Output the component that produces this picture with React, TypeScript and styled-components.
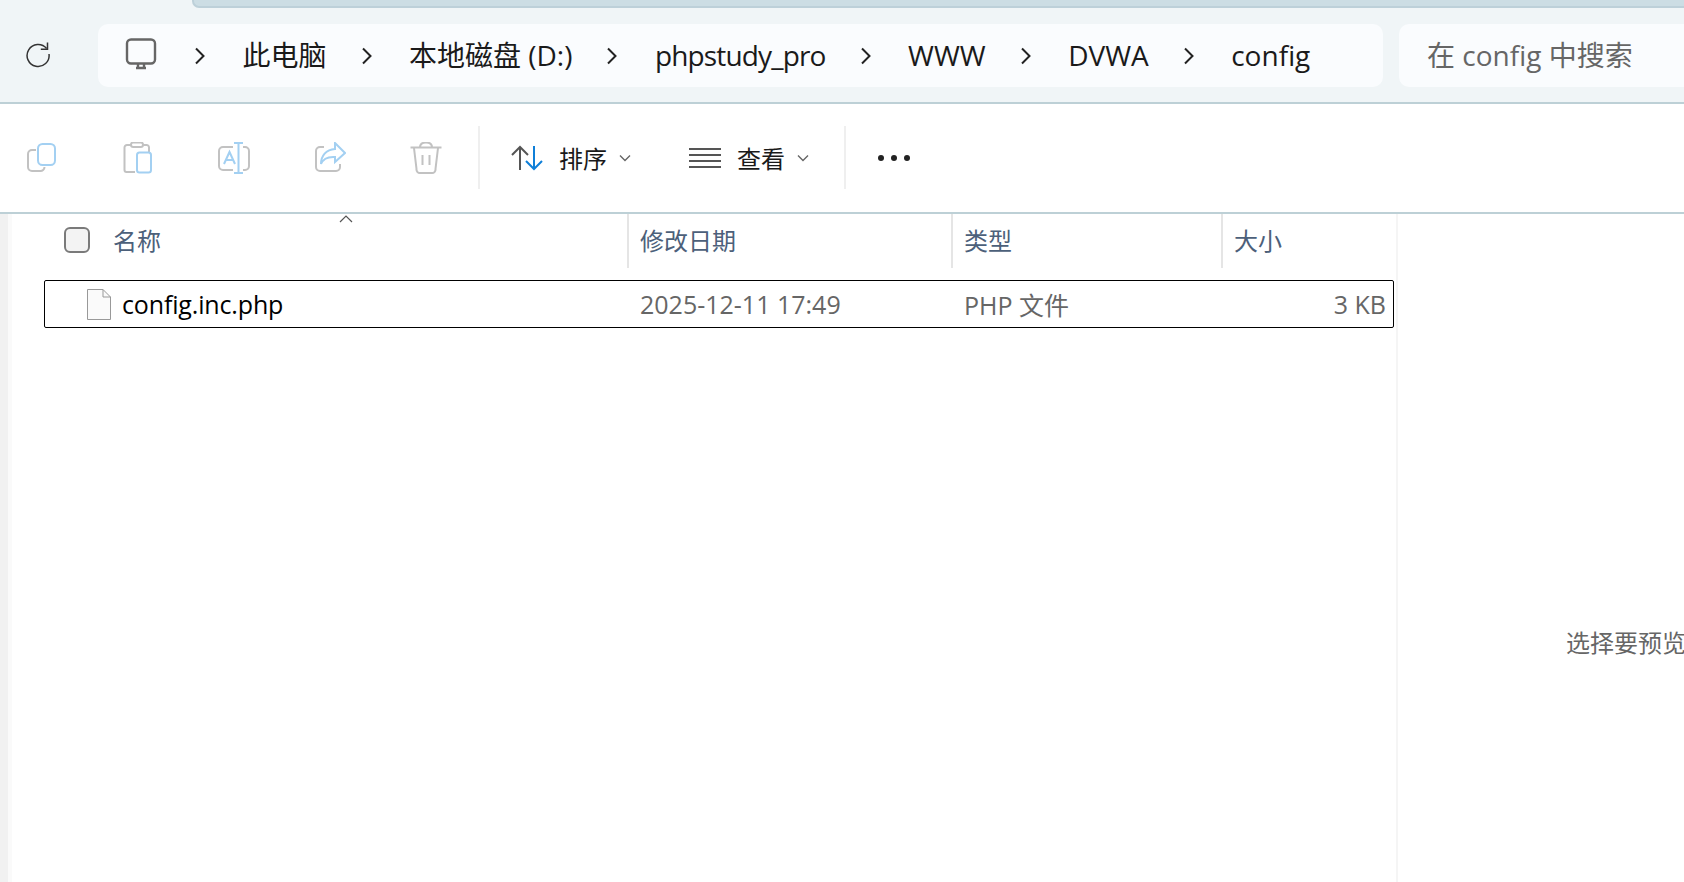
import styled, { createGlobalStyle } from 'styled-components';

const GlobalStyle = createGlobalStyle`
	html, body {
		margin: 0;
		padding: 0;
		width: 100%;
		height: 100%;
		overflow: hidden;
		background: #fff;
		font-family: "Open Sans", "Noto Sans CJK SC", sans-serif;
	}
`;

const Window = styled.div`
	display: flex;
	flex-direction: column;
	width: 1684px;
	height: 882px;
	overflow: hidden;
`;

const TabStrip = styled.div`
	flex: none;
	height: 8px;
	background: #f0f5f7;
	padding-left: 192px;
	box-sizing: border-box;
`;

const ActiveTabEdge = styled.div`
	height: 8px;
	background: #ccdde4;
	border-bottom: 2px solid #bdd0d9;
	border-left: 2px solid #bdd0d9;
	border-bottom-left-radius: 7px;
	box-sizing: border-box;
`;

const AddressRow = styled.div`
	flex: none;
	display: flex;
	align-items: center;
	height: 96px;
	box-sizing: border-box;
	padding: 16px 0 15px 24px;
	background: #f0f5f7;
	border-bottom: 2px solid #bdd0d6;
`;

const RefreshIcon = styled.svg`
	flex: none;
	width: 28px;
	height: 28px;
	margin: 0 46px 3px 0;
`;

const Breadcrumb = styled.div`
	flex: none;
	display: flex;
	align-items: center;
	width: 1285px;
	height: 63px;
	box-sizing: border-box;
	padding-left: 27px;
	gap: 33px;
	background: #fafcfe;
	border-radius: 10px;
	color: #1a1a1a;
	font-size: 28px;
	white-space: nowrap;
`;

const HomeIcon = styled.svg`
	flex: none;
	width: 32px;
	height: 32px;
	margin: 0 3px 3px 0;
`;

const CrumbChevron = styled.svg`
	flex: none;
	width: 14px;
	height: 20px;
	margin-right: 2.5px;
`;

const Crumb = styled.span<{ $tight?: boolean }>`
	line-height: 63px;
	letter-spacing: ${p => (p.$tight ? '-0.85px' : '0')};
`;

const SearchBox = styled.div`
	flex: none;
	width: 400px;
	height: 63px;
	margin-left: 16px;
	padding-left: 28px;
	box-sizing: border-box;
	background: #fafcfe;
	border-radius: 10px 0 0 10px;
	color: #666;
	font-size: 28px;
	line-height: 63px;
	white-space: nowrap;
`;

const Toolbar = styled.div`
	flex: none;
	display: flex;
	align-items: center;
	height: 110px;
	box-sizing: border-box;
	padding: 0 0 1px 26px;
	background: #fff;
	border-bottom: 2px solid #bdd0d6;
`;

const ToolIcon = styled.svg`
	flex: none;
	width: 32px;
	height: 32px;
	margin-right: 64px;
`;

const ToolDivider = styled.div<{ $left: number }>`
	flex: none;
	width: 2px;
	height: 63px;
	background: #efefef;
	margin-left: ${p => p.$left}px;
`;

const MenuButton = styled.div<{ $left: number }>`
	flex: none;
	display: flex;
	align-items: center;
	margin-left: ${p => p.$left}px;
	color: #1a1a1a;
	font-size: 24px;
	white-space: nowrap;
`;

const MenuIcon = styled.svg`
	flex: none;
`;

const MenuLabel = styled.span`
	margin: 0 12px 0 16px;
`;

const MoreDots = styled.div`
	flex: none;
	display: flex;
	gap: 7px;
	margin-left: 32px;
`;

const Dot = styled.span`
	width: 6px;
	height: 6px;
	border-radius: 50%;
	background: #222;
`;

const Content = styled.div`
	flex: 1;
	display: flex;
	min-height: 0;
`;

const NavEdge = styled.div`
	flex: none;
	width: 8px;
	background: #f1f1f1;
	border-right: 4px solid #fafafa;
`;

const ListPane = styled.div`
	position: relative;
	flex: none;
	width: 1384px;
	box-sizing: border-box;
	padding-left: 32px;
	background: #fff;
`;

const Columns = styled.div`
	display: grid;
	grid-template-columns: 583px 324px 270px 173px;
`;

const HeaderRow = styled(Columns)`
	height: 54px;
	color: #4c607a;
	font-size: 24px;
`;

const HeaderCell = styled.div`
	display: flex;
	align-items: center;
	padding: 0 0 3px 11px;
	border-left: 2px solid #e5e5e5;
	white-space: nowrap;
`;

const NameHeaderCell = styled(HeaderCell)`
	border-left: 0;
	padding-left: 20px;
	gap: 23px;
`;

const CheckBox = styled.div`
	flex: none;
	width: 26px;
	height: 26px;
	box-sizing: border-box;
	background: #f3f3f3;
	border: 2px solid #7a7a7a;
	border-radius: 6px;
`;

const SortCaret = styled.svg`
	position: absolute;
	left: 327px;
	top: 1px;
	width: 14px;
	height: 8px;
`;

const FileRow = styled(Columns)`
	width: 1350px;
	height: 48px;
	margin-top: 12px;
	box-sizing: border-box;
	border: 1px solid #000;
	border-radius: 2px;
	color: #666;
	font-size: 25px;
	align-items: center;
	white-space: nowrap;
`;

const NameCell = styled.div`
	display: flex;
	align-items: center;
	gap: 12px;
	padding-left: 42px;
	color: #000;
	font-size: 25px;
	letter-spacing: -0.15px;
`;

const FileIcon = styled.svg`
	flex: none;
	width: 24px;
	height: 31px;
	margin-right: -1px;
`;

const Cell = styled.div`
	padding-left: 12px;
`;

const SizeCell = styled.div`
	text-align: right;
	padding-right: 9px;
	margin-left: -4px;
`;

const PreviewPane = styled.div`
	flex: none;
	display: flex;
	align-items: center;
	width: 300px;
	box-sizing: border-box;
	padding: 186px 0 0 168px;
	background: #fff;
	border-left: 2px solid #f5f5f5;
	color: #666;
	font-size: 24px;
	white-space: nowrap;
	overflow: hidden;
`;

const GREY = '#c2c2c2';
const BLUE = '#a3d0f2';

const crumbs = [
	{ label: '此电脑' },
	{ label: '本地磁盘 (D:)' },
	{ label: 'phpstudy_pro', tight: true },
	{ label: 'WWW' },
	{ label: 'DVWA' },
	{ label: 'config' },
];

function SmallChevron() {
	return (
		<svg width="12" height="8" viewBox="0 0 12 8" fill="none" stroke="#666" strokeWidth="1.4">
			<path d="M1 1.5 L6 6.5 L11 1.5" />
		</svg>
	);
}

export default function App() {
	return (
		<Window>
			<GlobalStyle />
			<TabStrip>
				<ActiveTabEdge />
			</TabStrip>
			<AddressRow>
				<RefreshIcon viewBox="0 0 28 28" fill="none" stroke="#333" strokeWidth="1.5">
					<path d="M22.6 8.5 A11 11 0 1 0 25 14" />
					<path d="M23.5 2.5 V9.2 H16.8" />
				</RefreshIcon>
				<Breadcrumb>
					<HomeIcon viewBox="0 0 32 32" fill="none" stroke="#666" strokeWidth="2.4">
						<rect x="2" y="1.5" width="28" height="24" rx="4" />
						<path d="M11 30 H21 M13 26 V30 M19 26 V30" />
					</HomeIcon>
					{crumbs.map(c => (
						<CrumbItem key={c.label} label={c.label} tight={c.tight} />
					))}
				</Breadcrumb>
				<SearchBox>在 config 中搜索</SearchBox>
			</AddressRow>
			<Toolbar>
				<ToolIcon viewBox="0 0 32 32" fill="none" strokeWidth="2">
					<path d="M10 8 H6 A4 4 0 0 0 2 12 V25 A4 4 0 0 0 6 29 H14 A4 4 0 0 0 18.5 25" stroke={GREY} />
					<rect x="12" y="2" width="17" height="21" rx="4.5" stroke={BLUE} />
				</ToolIcon>
				<ToolIcon viewBox="0 0 32 32" fill="none" strokeWidth="2">
					<path d="M10 3 H5 A2.5 2.5 0 0 0 2.5 5.5 V28 A2 2 0 0 0 4.5 30 H13 M20 3 H24 A2.5 2.5 0 0 1 27 5.5 V10" stroke={GREY} />
					<rect x="9" y="0.5" width="12" height="4.5" rx="2.2" stroke={GREY} />
					<rect x="15" y="10.5" width="14" height="20" rx="2.5" stroke={BLUE} />
				</ToolIcon>
				<ToolIcon viewBox="0 0 32 32" fill="none" strokeWidth="2">
					<path d="M15 5 H5 A4 4 0 0 0 1 9 V24 A4 4 0 0 0 5 28 H15 M25 5 H27 A4 4 0 0 1 31 9 V24 A4 4 0 0 1 27 28 H25" stroke={GREY} />
					<path d="M16 1 H25 M20.5 1 V31 M16 31 H25 M6 22 L11.5 10 L17 22 M8 18 H15" stroke={BLUE} />
				</ToolIcon>
				<ToolIcon viewBox="0 0 32 32" fill="none" strokeWidth="2">
					<path d="M10 5 H6 A4 4 0 0 0 2 9 V25 A4 4 0 0 0 6 29 H22 A4 4 0 0 0 26 25 V22" stroke={GREY} />
					<path d="M21 1 L31 11 L21 20 V15 C14 14.5 9 17 7 22 C7 14 12 7.5 21 7 Z" stroke={BLUE} />
				</ToolIcon>
				<ToolIcon viewBox="0 0 32 32" fill="none" stroke={GREY} strokeWidth="2">
					<path d="M0.5 5.5 H31.5 M10 5.5 C10 2 12 0.5 16 0.5 C20 0.5 22 2 22 5.5 M4 6 L6.5 27 A3.5 3.5 0 0 0 10 31 H22 A3.5 3.5 0 0 0 25.5 27 L28 6 M12.5 13 V23 M19.5 13 V23" />
				</ToolIcon>
				<ToolDivider $left={-28} />
				<MenuButton $left={31}>
					<MenuIcon width="32" height="26" viewBox="0 0 32 26" fill="none" strokeWidth="2">
						<path d="M9 25 V2 M1 10 L9 2 L17 10" stroke="#555" />
						<path d="M23 1 V24 M15 16 L23 24 L31 16" stroke="#0f7fd8" />
					</MenuIcon>
					<MenuLabel>排序</MenuLabel>
					<SmallChevron />
				</MenuButton>
				<MenuButton $left={58}>
					<MenuIcon width="32" height="20" viewBox="0 0 32 20" fill="none" stroke="#555" strokeWidth="2">
						<path d="M0 1 H32 M0 7 H32 M0 13 H32 M0 19 H32" />
					</MenuIcon>
					<MenuLabel>查看</MenuLabel>
					<SmallChevron />
				</MenuButton>
				<ToolDivider $left={35} />
				<MoreDots>
					<Dot />
					<Dot />
					<Dot />
				</MoreDots>
			</Toolbar>
			<Content>
				<NavEdge />
				<ListPane>
					<SortCaret viewBox="0 0 14 8" fill="none" stroke="#555" strokeWidth="1.2">
						<path d="M1 7 L7 1 L13 7" />
					</SortCaret>
					<HeaderRow>
						<NameHeaderCell>
							<CheckBox />
							<span>名称</span>
						</NameHeaderCell>
						<HeaderCell>修改日期</HeaderCell>
						<HeaderCell>类型</HeaderCell>
						<HeaderCell>大小</HeaderCell>
					</HeaderRow>
					<FileRow>
						<NameCell>
							<FileIcon viewBox="0 0 24 31" fill="#fafafa" stroke="#999" strokeWidth="1">
								<path d="M0.5 0.5 H16 L23.5 8 V30.5 H0.5 Z" />
								<path d="M16 0.5 V8 H23.5" fill="none" />
							</FileIcon>
							<span>config.inc.php</span>
						</NameCell>
						<Cell>2025-12-11 17:49</Cell>
						<Cell>PHP 文件</Cell>
						<SizeCell>3 KB</SizeCell>
					</FileRow>
				</ListPane>
				<PreviewPane>选择要预览的文件。</PreviewPane>
			</Content>
		</Window>
	);
}

function CrumbItem({ label, tight }: { label: string; tight?: boolean }) {
	return (
		<>
			<CrumbChevron viewBox="0 0 14 20" fill="none" stroke="#222" strokeWidth="2">
				<path d="M3 2.5 L10.5 10 L3 17.5" />
			</CrumbChevron>
			<Crumb $tight={tight}>{label}</Crumb>
		</>
	);
}
